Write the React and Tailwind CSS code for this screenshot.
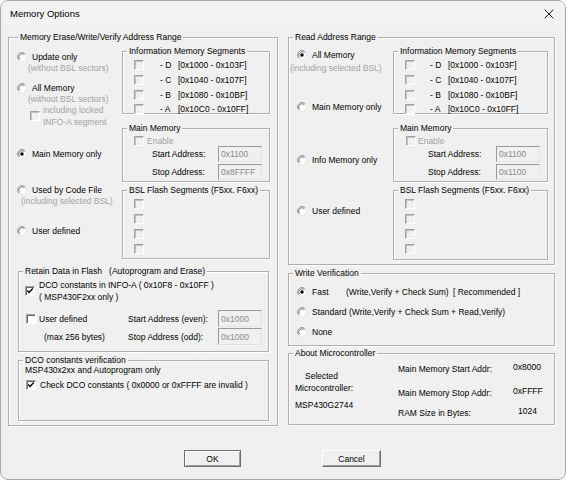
import React from "react";

function Group({ label, labelLeft = "left-[4px]", className = "", children }) {
  return (
    <div className={`relative border border-[#b0b0b0] shadow-[inset_1px_1px_0_#fff,1px_1px_0_#fff] ${className}`}>
      <span className={`absolute top-[-7px] ${labelLeft} bg-[#f0f0f0] px-[2px] h-[12px] leading-[12px] whitespace-pre text-black`}>
        {label}
      </span>
      {children}
    </div>
  );
}

function Check({ checked = false, disabled = false }) {
  return (
    <span
      className={`relative inline-block w-[10px] h-[10px] shrink-0 border border-t-[#a0a0a0] border-l-[#a0a0a0] border-b-white border-r-white ${
        disabled ? "bg-[#f0f0f0] shadow-[inset_1px_1px_0_#c4c4c4]" : "bg-white shadow-[inset_1px_1px_0_#6a6a6a]"
      }`}
    >
      {checked && (
        <svg width="8" height="8" viewBox="0 0 8 8" className="absolute left-0 top-0">
          <path d="M1.3 3.6 L3 5.4 L6.8 1.6" fill="none" stroke="#000" strokeWidth="1.4" />
        </svg>
      )}
    </span>
  );
}

function Radio({ on = false }) {
  return (
    <svg width="10" height="10" viewBox="0 0 10 10" className="shrink-0">
      <circle cx="5" cy="5" r="4.5" fill="#fff" />
      <path d="M1.8 8.2 A4.5 4.5 0 0 1 8.2 1.8" fill="none" stroke="#9a9a9a" strokeWidth="1" />
      <path d="M2.6 7.4 A3.4 3.4 0 0 1 7.4 2.6" fill="none" stroke="#5a5a5a" strokeWidth="0.8" />
      <path d="M8.2 1.8 A4.5 4.5 0 0 1 1.8 8.2" fill="none" stroke="#e6e6e6" strokeWidth="1" />
      {on && <circle cx="5" cy="5" r="1.7" fill="#000" />}
    </svg>
  );
}

function Field({ v, h = "h-[16px]" }) {
  return (
    <div
      className={`w-[44px] ${h} shrink-0 border border-t-[#9a9a9a] border-l-[#9a9a9a] border-b-[#e4e4e4] border-r-[#e4e4e4] bg-[#f0f0f0] text-[#8a8a8a] pl-[2px] flex items-center`}
    >
      {v}
    </div>
  );
}

function SegRow({ seg, range, pl = "pl-[11px]", gap = "ml-[16px]" }) {
  return (
    <div className={`h-[15px] flex items-center ${pl}`}>
      <Check disabled />
      {seg && <span className={`${gap} w-[18px] whitespace-pre`}>{seg}</span>}
      {range && <span className="whitespace-pre">{range}</span>}
    </div>
  );
}

function InfoFrame({ w, pl, gap }) {
  return (
    <Group label="Information Memory Segments" className={`${w} h-[63px]`}>
      <div className="pt-[5px] flex flex-col">
        <SegRow seg="- D" range="[0x1000 - 0x103F]" pl={pl} gap={gap} />
        <SegRow seg="- C" range="[0x1040 - 0x107F]" pl={pl} gap={gap} />
        <SegRow seg="- B" range="[0x1080 - 0x10BF]" pl={pl} gap={gap} />
        <div className="-mt-[1px]">
          <SegRow seg="- A" range="[0x10C0 - 0x10FF]" pl={pl} gap={gap} />
        </div>
      </div>
    </Group>
  );
}

function BslFrame({ w, h }) {
  return (
    <Group label="BSL Flash Segments (F5xx. F6xx)" className={`${w} ${h} mt-[8px]`}>
      <div className="pt-[5px] flex flex-col">
        <SegRow />
        <SegRow />
        <SegRow />
        <SegRow />
      </div>
    </Group>
  );
}

export default function App() {
  return (
    <div className="w-[566px] h-[480px] bg-white font-['Liberation_Sans',Arial,sans-serif] text-[8.5px] leading-[12px] text-black">
      <div className="w-[566px] h-[480px] rounded-[8px] border border-[#a8a8a8] bg-[#f0f0f0] overflow-hidden flex flex-col">
        {/* title bar */}
        <div className="h-[25px] shrink-0 flex items-center justify-between pl-[9px] pr-[11px] bg-[#f2f2f2]">
          <span className="text-[9.5px] text-black">Memory Options</span>
          <svg width="10" height="10" viewBox="0 0 10 10">
            <path d="M0.7 0.7 L9.3 9.3 M9.3 0.7 L0.7 9.3" stroke="#1a1a1a" strokeWidth="1" />
          </svg>
        </div>

        <div className="pt-[11px] pl-[7px] flex items-start">
          {/* LEFT */}
          <Group label="Memory Erase/Write/Verify Address Range" labelLeft="left-[9px]" className="w-[270px] h-[389px] shrink-0">
            <div className="flex">
              <div className="ml-[8px] w-[105px] pt-[13px] flex flex-col">
                <div className="h-[11px] flex items-center gap-[5px]">
                  <Radio />
                  <span>Update only</span>
                </div>
                <div className="h-[12px] pl-[11px] text-[#a3a3a3] whitespace-nowrap">(without BSL sectors)</div>
                <div className="mt-[8px] h-[12px] flex items-center gap-[5px]">
                  <Radio />
                  <span>All Memory</span>
                </div>
                <div className="h-[10px] leading-[10px] pl-[11px] text-[#a3a3a3] whitespace-nowrap">(without BSL sectors)</div>
                <div className="flex items-center pl-[13px]">
                  <Check disabled />
                  <div className="ml-[3px] text-[#a3a3a3] leading-[12px]">
                    <div>including locked</div>
                    <div>INFO-A segment</div>
                  </div>
                </div>
                <div className="mt-[20px] h-[12px] flex items-center gap-[5px]">
                  <Radio on />
                  <span>Main Memory only</span>
                </div>
                <div className="mt-[24px] h-[11px] flex items-center gap-[5px]">
                  <Radio />
                  <span>Used by Code File</span>
                </div>
                <div className="h-[12px] pl-[4px] text-[#a3a3a3] whitespace-nowrap">(including selected BSL)</div>
                <div className="mt-[18px] h-[12px] flex items-center gap-[5px]">
                  <Radio />
                  <span>User defined</span>
                </div>
              </div>
              <div className="w-[148px] pt-[13px] flex flex-col">
                <InfoFrame w="w-[148px]" pl="pl-[11px]" gap="ml-[16px]" />
                <Group label="Main Memory" className="w-[148px] h-[54px] mt-[14px]">
                  <div className="pt-[6px] flex flex-col">
                    <div className="h-[11px] flex items-center pl-[11px]">
                      <Check disabled />
                      <span className="ml-[3px] text-[#a3a3a3]">Enable</span>
                    </div>
                    <div className="h-[16px] flex items-center">
                      <span className="ml-[29px] w-[66px]">Start Address:</span>
                      <Field v="0x1100" />
                    </div>
                    <div className="mt-[2px] h-[16px] flex items-center">
                      <span className="ml-[29px] w-[66px]">Stop Address:</span>
                      <Field v="0x8FFFF" />
                    </div>
                  </div>
                </Group>
                <BslFrame w="w-[148px]" h="h-[69px]" />
              </div>
            </div>

            <Group label="Retain Data in Flash   (Autoprogram and Erase)" className="ml-[9px] mt-[12px] w-[251px] h-[81px]">
              <div className="pt-[7px] flex flex-col">
                <div className="flex items-center pl-[6px]">
                  <Check checked />
                  <div className="ml-[4px] leading-[12px]">
                    <div className="whitespace-pre">DCO constants in INFO-A ( 0x10F8 - 0x10FF )</div>
                    <div className="whitespace-pre">( MSP430F2xx only )</div>
                  </div>
                </div>
                <div className="mt-[7px] h-[17px] flex items-center">
                  <div className="w-[109px] flex items-center pl-[7px]">
                    <Check />
                    <span className="ml-[3px]">User defined</span>
                  </div>
                  <span className="w-[90px] whitespace-nowrap">Start Address (even):</span>
                  <Field v="0x1000" h="h-[17px]" />
                </div>
                <div className="mt-[1px] h-[17px] flex items-center">
                  <div className="w-[109px] pl-[25px] whitespace-nowrap">(max 256 bytes)</div>
                  <span className="w-[90px] whitespace-nowrap">Stop Address (odd):</span>
                  <Field v="0x1000" h="h-[17px]" />
                </div>
              </div>
            </Group>

            <Group label="DCO constants verification" className="ml-[9px] mt-[8px] w-[251px] h-[61px]">
              <div className="pt-[3px] flex flex-col">
                <div className="h-[12px] pl-[6px] whitespace-nowrap">MSP430x2xx and Autoprogram only</div>
                <div className="mt-[3px] h-[12px] flex items-center pl-[7px]">
                  <Check checked />
                  <span className="ml-[4px] whitespace-pre">Check DCO constants ( 0x0000 or 0xFFFF are invalid )</span>
                </div>
              </div>
            </Group>
          </Group>

          {/* RIGHT */}
          <div className="ml-[10px] w-[267px] flex flex-col">
            <Group label="Read Address Range" className="w-[267px] h-[228px]">
              <div className="flex">
                <div className="w-[104px] pt-[11px] flex flex-col">
                  <div className="h-[12px] pl-[8px] flex items-center gap-[5px]">
                    <Radio on />
                    <span>All Memory</span>
                  </div>
                  <div className="mt-[1px] h-[12px] pl-[1px] text-[#a3a3a3] whitespace-nowrap">(including selected BSL)</div>
                  <div className="mt-[27px] h-[12px] pl-[8px] flex items-center gap-[5px]">
                    <Radio />
                    <span>Main Memory only</span>
                  </div>
                  <div className="mt-[41px] h-[12px] pl-[8px] flex items-center gap-[5px]">
                    <Radio />
                    <span>Info Memory only</span>
                  </div>
                  <div className="mt-[39px] h-[12px] pl-[8px] flex items-center gap-[5px]">
                    <Radio />
                    <span>User defined</span>
                  </div>
                </div>
                <div className="w-[155px] pt-[13px] flex flex-col">
                  <InfoFrame w="w-[155px]" pl="pl-[11px]" gap="ml-[15px]" />
                  <Group label="Main Memory" className="w-[155px] h-[54px] mt-[14px]">
                    <div className="pt-[6px] flex flex-col">
                      <div className="h-[11px] flex items-center pl-[12px]">
                        <Check disabled />
                        <span className="ml-[2px] text-[#a3a3a3]">Enable</span>
                      </div>
                      <div className="h-[16px] flex items-center">
                        <span className="ml-[34px] w-[68px]">Start Address:</span>
                        <Field v="0x1100" />
                      </div>
                      <div className="mt-[2px] h-[16px] flex items-center">
                        <span className="ml-[34px] w-[68px]">Stop Address:</span>
                        <Field v="0x1100" />
                      </div>
                    </div>
                  </Group>
                  <BslFrame w="w-[155px]" h="h-[70px]" />
                </div>
              </div>
            </Group>

            <Group label="Write Verification" className="mt-[8px] w-[267px] h-[73px]">
              <div className="pt-[12px] flex flex-col">
                <div className="h-[12px] pl-[8px] flex items-center">
                  <Radio on />
                  <span className="ml-[5px] w-[34px]">Fast</span>
                  <span className="w-[107px] whitespace-pre">(Write,Verify + Check Sum)</span>
                  <span className="whitespace-pre">[ Recommended ]</span>
                </div>
                <div className="mt-[8px] h-[12px] pl-[8px] flex items-center">
                  <Radio />
                  <span className="ml-[5px] w-[37px]">Standard</span>
                  <span className="whitespace-pre">(Write,Verify + Check Sum + Read,Verify)</span>
                </div>
                <div className="mt-[8px] h-[12px] pl-[8px] flex items-center">
                  <Radio />
                  <span className="ml-[5px]">None</span>
                </div>
              </div>
            </Group>

            <Group label="About Microcontroller" className="mt-[7px] w-[267px] h-[72px]">
              <div className="flex">
                <div className="w-[109px] pl-[6px] pt-[16px] flex flex-col">
                  <div className="h-[12px] pl-[10px]">Selected</div>
                  <div className="h-[12px]">Microcontroller:</div>
                  <div className="mt-[5px] h-[12px]">MSP430G2744</div>
                </div>
                <div className="pt-[9px] flex flex-col">
                  <div className="h-[12px] flex items-center">
                    <span className="w-[115px] whitespace-nowrap">Main Memory Start Addr:</span>
                    <span className="mb-[5px]">0x8000</span>
                  </div>
                  <div className="mt-[12px] h-[12px] flex items-center">
                    <span className="w-[115px] whitespace-nowrap">Main Memory Stop Addr:</span>
                    <span className="mb-[5px]">0xFFFF</span>
                  </div>
                  <div className="mt-[8px] h-[12px] flex items-center">
                    <span className="w-[115px] whitespace-nowrap">RAM Size in Bytes:</span>
                    <span className="mb-[5px] pl-[5px]">1024</span>
                  </div>
                </div>
              </div>
            </Group>
          </div>
        </div>

        {/* buttons */}
        <div className="mt-[24px] pl-[183px] flex items-start">
          <div className="w-[57px] h-[17px] border border-[#6e6e6e] shadow-[inset_1px_1px_0_#fff,inset_-1px_-1px_0_#a0a0a0] flex items-center justify-center">
            OK
          </div>
          <div className="ml-[81px] w-[59px] h-[17px] border border-t-white border-l-white border-b-[#6e6e6e] border-r-[#6e6e6e] shadow-[inset_-1px_-1px_0_#a0a0a0] flex items-center justify-center">
            Cancel
          </div>
        </div>
      </div>
    </div>
  );
}
